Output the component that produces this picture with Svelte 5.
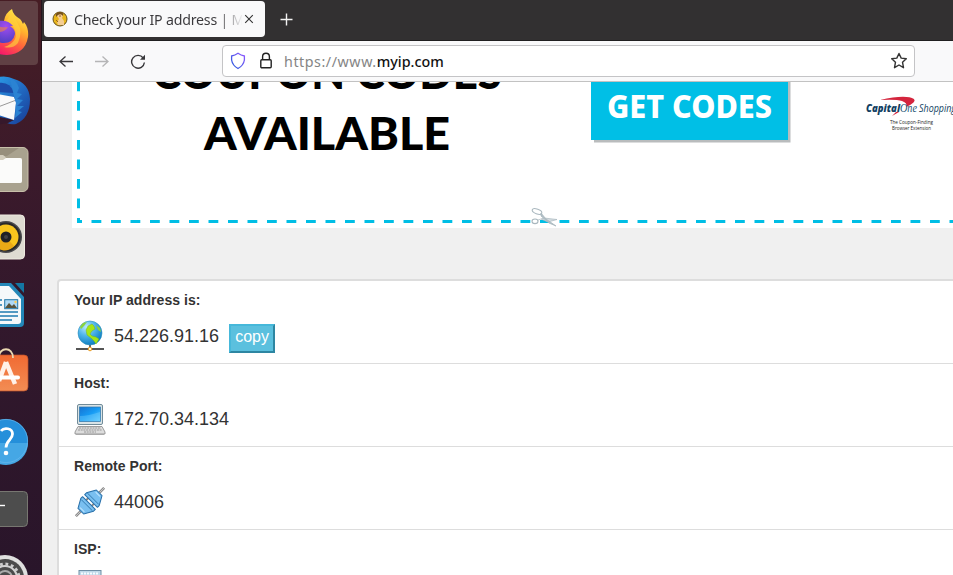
<script>
  const rows = [
    { label: 'Your IP address is:', value: '54.226.91.16', icon: 'globe', copy: true },
    { label: 'Host:', value: '172.70.34.134', icon: 'computer' },
    { label: 'Remote Port:', value: '44006', icon: 'plug' },
    { label: 'ISP:', value: '', icon: 'server' }
  ];
  const dock = ['firefox', 'mail', 'files', 'music', 'writer', 'store', 'help', 'terminal', 'settings'];
</script>

<div class="screen">
  <nav class="dock">
    {#each dock as app, i}
      <svg class="app" width="42" height="68" viewBox="0 {i * 68} 42 68">
        {#if app === 'firefox'}
          <defs>
            <linearGradient id="fx" x1=".8" y1="0" x2=".3" y2="1"><stop offset="0" stop-color="#fff44f" /><stop offset=".35" stop-color="#ffb52e" /><stop offset=".62" stop-color="#ff6a3a" /><stop offset="1" stop-color="#f5156c" /></linearGradient>
            <radialGradient id="fp" cx=".6" cy=".25" r=".8"><stop offset="0" stop-color="#a24cf0" /><stop offset="1" stop-color="#4b3fc0" /></radialGradient>
          </defs>
          <rect x="-6" y="1" width="44" height="64" rx="4" fill="#604044" />
          <path d="M-10 25L4 21Q5 13 12 9Q13 15 20 19Q22 21 23 24L24 22Q29 28 28 37Q25 54 7 55Q-5 55-10 48Z" fill="url(#fx)" />
          <path d="M5 22Q10 17 11 13Q16 18 18 24Q23 31 18 43Q13 49 4 47Q19 42 15 30Q13 24 5 22Z" fill="#ffd33c" opacity=".65" />
          <path d="M-6 22Q7 18 13 26L10 26Q15 29 15 34Q13 44 2 43Q-4 42-8 36Z" fill="url(#fp)" />
          <path d="M-3 26Q4 28 8 27Q5 32-1 32Z" fill="#ff8d2d" opacity=".55" />
        {:else if app === 'mail'}
          <defs><linearGradient id="tb" x1="0" y1="0" x2="1" y2="1"><stop stop-color="#2da8ee" /><stop offset=".5" stop-color="#226dc5" /><stop offset="1" stop-color="#173a94" /></linearGradient></defs>
          <path d="M-12 81Q3 73 14 79Q29 83 30 99Q30 118 16 124Q11 125 7 123L-10 115Z" fill="url(#tb)" />
          <path d="M-9 115L14 120L8 123L-10 126Z" fill="#36182b" />
          <path d="M-9 93L14 97L16 103L14 120L-8 113Z" fill="#fafafa" />
          <path d="M-2 107L15 100.5" stroke="#999" />
          <path d="M-2 83Q10 81 14 93L-3 92Z" fill="#1c4ba8" />
          <path d="M10 79Q16 79 19 88L17 93L22 94L17 99L23 100L17 106L24 106L18 111L22 112L15 118L16 102L14 96Z" fill="#2b83d3" />
        {:else if app === 'files'}
          <rect x="-16" y="147.5" width="44" height="44" rx="5" fill="#a9a28f" stroke="#c8c0aa" />
          <path d="M-4 148L19 148L7 156H-4Z" fill="#978f7c" />
          <path d="M-9 158V155H3Q5 156 6 158H20Q22 158 22 160V181Q22 183 20 183H-9Z" fill="#d3cdbd" />
          <path d="M-9 160H3L6 158H20Q22 158 22 160V181Q22 183 20 183H-9Z" fill="#fbfbfa" />
        {:else if app === 'music'}
          <rect x="-19" y="215" width="43.5" height="44" rx="4" fill="#dedbd1" stroke="#eeeae0" />
          <circle cx="6" cy="237" r="16" fill="#4a4a4d" />
          <circle cx="6" cy="237" r="14.5" fill="#292929" />
          <circle cx="6" cy="237" r="12.5" fill="#f8c51e" />
          <path d="M6 237L-6 244A12 12 0 0 0 14 246Z" fill="#e9a916" />
          <circle cx="6" cy="237" r="5.5" fill="#202125" />
          <circle cx="6" cy="237" r="2" fill="#404044" />
        {:else if app === 'writer'}
          <path d="M-15 283H11L24 297V323Q24 327 20 327H-15Z" fill="#2387b8" />
          <path d="M-15 286H9L21 299V321Q21 324 18 324H-15Z" fill="#f5f8fa" />
          <path d="M15 283H24V293Z" fill="#1476a2" />
          <path d="M0 300H2M0 305H2M0 312H18M0 316H18M0 320H12" stroke="#1e79b0" stroke-width="1.6" />
          <rect x="4.7" y="299.7" width="13" height="9" fill="#aed9f6" stroke="#2478a7" />
          <path d="M5 308L9 303L12 306L14 304L17 308Z" fill="#59543d" /><circle cx="15.5" cy="302" r="1.2" fill="#fc5" />
        {:else if app === 'store'}
          <defs><linearGradient id="shop" x2="0" y2="1"><stop stop-color="#f16a32" /><stop offset="1" stop-color="#f28d54" /></linearGradient></defs>
          <rect x="-16" y="355" width="44" height="36" rx="4" fill="url(#shop)" stroke="#bd522b" stroke-width=".7" />
          <path d="M-1 357C-1 347 13 346 13 358" fill="none" stroke="#ead8b1" stroke-width="1.8" />
          <path d="M6 362L-1 381M6 362L15 384" stroke="#fff1e8" stroke-width="4.5" />
          <path d="M-1 377.5H18" stroke="#fff" stroke-width="4" stroke-linecap="round" />
        {:else if app === 'help'}
          <circle cx="6" cy="441" r="22" fill="#258fda" />
          <path d="M-16 443H28A22 22 0 0 1-16 443Z" fill="#45a7e5" />
          <circle cx="6" cy="441" r="21.6" fill="none" stroke="#69b8ed" stroke-width=".7" />
          <path d="M1 431C4 427 12.5 428 12.5 434C12.5 440 6 440 6 447.5" stroke="white" stroke-width="2.8" fill="none" />
          <circle cx="6" cy="453" r="2.3" fill="white" />
        {:else if app === 'terminal'}
          <rect x="-16" y="491.5" width="43.5" height="35" rx="4" fill="#4d4d4d" stroke="#777771" />
          <path d="M0 505.5H5" stroke="white" stroke-width="1.4" />
        {:else}
          <circle cx="5" cy="578" r="23" fill="#e0e0df" />
          <circle cx="5" cy="578" r="19" fill="#4b4b4b" />
          <circle cx="5" cy="578" r="14" fill="none" stroke="#ccc" stroke-width="3" stroke-dasharray="2.8 2.7" />
          <circle cx="5" cy="578" r="12" fill="none" stroke="#d2d2d2" stroke-width="2" />
          <circle cx="5" cy="578" r="7" fill="none" stroke="#aaa" stroke-width="2" />
        {/if}
      </svg>
    {/each}
  </nav>

  <main class="browser">
    <header class="tabs">
      <div class="tab">
        <svg width="16" height="16" viewBox="0 0 16 16">
          <circle cx="8" cy="8" r="7" fill="#e8b51a" stroke="#65501d" />
          <path d="M5 5Q5 1 9 2Q12 4 10 7L12 10V14H6L5 11L7 8Z" fill="#f4cd93" />
          <path d="M4 6Q3 1 8 1Q12 1 11 5Q9 2 6 4Z" fill="#76501b" />
          <path d="M7 5H9M4 9L6 11" stroke="#9a6327" fill="none" />
        </svg>
        <span class="title">Check your IP address | M</span>
        <svg width="10" height="10" viewBox="0 0 10 10"><path d="M1.2 1.2L8.8 8.8M8.8 1.2L1.2 8.8" stroke="#333" stroke-width="1.1" /></svg>
      </div>
      <svg class="plus" width="13" height="13" viewBox="0 0 13 13"><path d="M6.5 .5V12.5M.5 6.5H12.5" stroke="#f2f2f2" stroke-width="1.4" /></svg>
    </header>

    <div class="toolbar">
      <svg width="16" height="16" viewBox="0 0 16 16"><path d="M15 8.5H2M7.5 3.5L2 8.5L7.5 13.5" fill="none" stroke="#38373a" stroke-width="1.3" /></svg>
      <svg width="16" height="16" viewBox="0 0 16 16"><path d="M1 8.5H14M8.5 3.5L14 8.5L8.5 13.5" fill="none" stroke="#b5b5b6" stroke-width="1.3" /></svg>
      <svg width="16" height="16" viewBox="0 0 16 16"><path d="M13.2 5A6.4 6.4 0 1 0 14.4 9.5" fill="none" stroke="#38373a" stroke-width="1.4" /><path d="M15 1.8V6.8H10Z" fill="#38373a" /></svg>
      <div class="address">
        <svg width="16" height="18" viewBox="0 0 16 18"><defs><linearGradient id="sh" x1="0" y1="1" x2="1" y2="0"><stop stop-color="#245bdb" /><stop offset="1" stop-color="#9057ff" /></linearGradient></defs><path d="M8 1.3Q11 3.5 14.4 4V8Q13.5 13.5 8 16.5Q2.5 13.5 1.6 8V4Q5 3.5 8 1.3Z" fill="none" stroke="url(#sh)" stroke-width="1.3" /></svg>
        <svg class="lock" width="12" height="17" viewBox="0 0 12 17"><rect x=".8" y="7.7" width="10.4" height="8" rx="1" fill="none" stroke="#222" stroke-width="1.4" /><path d="M2.6 7.5V4.7Q2.6 1.2 6 1.2T9.4 4.7V7.5" fill="none" stroke="#222" stroke-width="1.4" /></svg>
        <span class="url"><span class="protocol">https://www.</span><span class="domain">myip.com</span></span>
        <svg class="star" width="18" height="18" viewBox="0 0 18 18"><path d="M9 1.5L11.2 6.1L16.3 6.7L12.5 10.2L13.5 15.7L9 13L4.5 15.7L5.5 10.2L1.7 6.7L6.8 6.1Z" fill="none" stroke="#333" stroke-width="1.4" stroke-linejoin="round" /></svg>
      </div>
    </div>

    <section class="page">
      <svg class="ad" width="881" height="146" viewBox="72 82 881 146">
        <rect x="72" y="82" width="881" height="146" fill="white" />
        <path d="M78.5 81.5V223" stroke="#00bee5" stroke-width="3" stroke-dasharray="9.8 9.7" />
        <path d="M77 221.5H82M91.5 221.5H953" stroke="#00bee5" stroke-width="3" stroke-dasharray="9.8 9.7" />
        <g font-family="Lato, sans-serif" font-weight="900">
          <text x="152" y="89" font-size="45.8" textLength="350" lengthAdjust="spacingAndGlyphs">COUPON CODES</text>
          <text x="204" y="149.6" font-size="45.8" textLength="246" lengthAdjust="spacingAndGlyphs">AVAILABLE</text>
        </g>
        <path d="M594 82H790.5V142.5H594Z" fill="#b9bcbd" />
        <path d="M591 82H788V140H591Z" fill="#00bfe6" />
        <text x="607" y="118" font-family="Noto Sans, sans-serif" font-weight="800" font-size="31.4" textLength="165" lengthAdjust="spacingAndGlyphs" fill="white">GET CODES</text>
        <path d="M880 100Q906 94 914 99Q917 102 906 107Q908 103 902 101Q896 99 880 100Z" fill="#d4253d" />
        <path d="M899 112L892 116L896 112Z" fill="#d4253d" />
        <text x="866" y="112" font-family="Open Sans, sans-serif" font-weight="800" font-style="italic" font-size="11" textLength="34" lengthAdjust="spacingAndGlyphs" fill="#123f62">Capital</text>
        <text x="900" y="112" font-family="Liberation Serif, serif" font-style="italic" font-size="12" textLength="17" lengthAdjust="spacingAndGlyphs" fill="#235473">One</text>
        <text x="919" y="112" font-family="Open Sans, sans-serif" font-style="italic" font-size="10" textLength="37" lengthAdjust="spacingAndGlyphs" fill="#123f62">Shopping</text>
        <g font-family="Open Sans, sans-serif" font-size="5" fill="#222"><text x="890" y="123.7" textLength="43" lengthAdjust="spacingAndGlyphs">The Coupon-Finding</text><text x="892" y="129.5" textLength="39" lengthAdjust="spacingAndGlyphs">Browser Extension</text></g>
        <g fill="none" stroke="#a9b7be" stroke-width="1.1"><ellipse cx="537" cy="211.5" rx="5" ry="2.3" transform="rotate(20 537 211.5)" /><ellipse cx="535" cy="221.3" rx="3" ry="2.3" /><path d="M538 220L544 218L557 219.5L548 222L541 219" fill="#d5dde1" stroke-width=".7" /><path d="M541 213L546 219L556 226L549 223L541 216Z" fill="#b1c0c8" stroke-width=".8" /></g>
      </svg>

      <div class="card">
        {#each rows as row}
          <article>
            <h4>{row.label}</h4>
            <div class="value">
              <svg class="icon" width="32" height="32" viewBox="0 0 32 32">
                {#if row.icon === 'globe'}
                  <defs><radialGradient id="earth" cx=".35" cy=".25" r=".8"><stop stop-color="#bceaff" /><stop offset=".45" stop-color="#51b5eb" /><stop offset="1" stop-color="#087abf" /></radialGradient></defs>
                  <path d="M16 25V29M2 29H30" stroke="#555" stroke-width="1.8" />
                  <circle cx="16" cy="13" r="12" fill="url(#earth)" stroke="#2c8eba" stroke-width=".6" />
                  <path d="M14 6L18 4L20 6L21 9L18 11L16 14L18 16L22 17L25 19L22 24L20 21L17 18L13 15L12 10Z" fill="#a6e616" stroke="#69ab16" stroke-width=".4" />
                  <path d="M6 7L9 3L13 2L10 6L7 9ZM22 5L26 8L27 12L24 10Z" fill="#8bd33e" />
                  <circle cx="16" cy="29" r="1.8" fill="#fff9dc" stroke="#e99a22" />
                {:else if row.icon === 'computer'}
                  <defs><linearGradient id="lcd" x1="0" y1="0" x2="1" y2="1"><stop stop-color="#1773d2" /><stop offset=".5" stop-color="#169bf4" /><stop offset="1" stop-color="#65cfff" /></linearGradient></defs>
                  <rect x="3.5" y="1.5" width="25" height="20" rx="1.5" fill="#d9e3e6" stroke="#718b98" />
                  <rect x="5.5" y="4" width="21" height="14.5" fill="url(#lcd)" stroke="#3475a7" stroke-width=".7" />
                  <path d="M6 13Q14 13 26 9V18H6Z" fill="#83d7ff" opacity=".35" />
                  <path d="M4 23.5H28L31 29V31H1V29Z" fill="#ddd" stroke="#888" stroke-width=".8" />
                  <path d="M5 25H27M4 27H28M10 29H22" stroke="#999" stroke-width="1" stroke-dasharray="2 .7" /><path d="M2 31.5H30" stroke="#aaa" />
                {:else if row.icon === 'plug'}
                  <g transform="rotate(-45 16 16)">
                    <path d="M-4 16H3M29 16H36" stroke="#777" stroke-width="2.6" /><path d="M-4 16H3M29 16H36" stroke="#ccc" />
                    <path d="M14 12H18M14 20H18" stroke="#888" stroke-width="2" />
                    <path d="M14.5 7V25H12L3 20V12L12 7Z" fill="#79bff0" stroke="#286fa9" stroke-linejoin="round" />
                    <path d="M17.5 7V25H20L29 20V12L20 7Z" fill="#79bff0" stroke="#286fa9" stroke-linejoin="round" />
                    <path d="M11.5 8V24M20.5 8V24" stroke="#2f78ae" stroke-width=".9" /><path d="M5 13V19M27 13V19" stroke="#c1e6ff" />
                  </g>
                {:else}
                  <rect x="5" y="1.5" width="22" height="29" fill="#bfd9e9" stroke="#6f8fa5" /><path d="M7 4.5H25M7 7.5H25" stroke="#f4fbff" stroke-width="2" stroke-dasharray="2 1" />
                {/if}
              </svg>
              <span>{row.value}</span>
              {#if row.copy}<button>copy</button>{/if}
            </div>
          </article>
        {/each}
      </div>
    </section>
  </main>
</div>

<style>
  :global(body) { margin: 0; overflow: hidden; }
  * { box-sizing: border-box; }
  svg { display: block; flex: none; }
  .screen { width: 953px; height: 575px; display: flex; overflow: hidden; font-family: "Liberation Sans", Arial, sans-serif; }
  .dock { width: 42px; height: 575px; flex: none; overflow: hidden; background: linear-gradient(175deg, #471d24 0, #3b1a2b 30%, #32182c 55%, #29152a 100%); border-right: 1px solid #25151e; }
  .app { overflow: visible; }
  .browser { width: 911px; height: 575px; overflow: hidden; display: flex; flex-direction: column; background: #f0f0f0; }
  .tabs { height: 41px; flex: none; display: flex; background: #323031; border-bottom: 1px solid #201f20; }
  .tab { width: 221px; height: 36px; margin: 1px 0 0 2px; padding-left: 8px; border-radius: 4px; background: #f9f9fa; display: flex; align-items: center; }
  .title { width: 168px; margin: 0 2px 0 6px; padding-top: 2px; font: 14.2px/20px "Noto Sans", sans-serif; letter-spacing: -.22px; white-space: nowrap; overflow: hidden; color: transparent; background: linear-gradient(90deg, #39383b 85%, rgba(57,56,59,.05)); background-clip: text; }
  .plus { margin: 13px 0 0 15px; }
  .toolbar { height: 41px; flex: none; display: flex; align-items: center; padding-left: 16px; background: #f9f9fa; border-bottom: 1px solid #c2c2c2; }
  .toolbar > svg { margin-right: 20px; }
  .address { width: 693px; height: 32px; margin-left: 56px; padding: 0 7px; flex: none; display: flex; align-items: center; border: 1px solid #c4c4c6; border-radius: 4px; background: white; }
  .lock { margin-left: 14px; margin-bottom: 2px; }
  .url { display: flex; margin-left: 12px; padding-top: 2px; font: 14.3px/20px "Noto Sans", sans-serif; white-space: nowrap; }
  .protocol { color: #858585; letter-spacing: .54px; }
  .domain { color: #111; font-weight: 500; }
  .star { margin-left: auto; margin-right: -1px; }
  .page { height: 493px; overflow: hidden; }
  .ad { margin-left: 30px; }
  .card { width: 930px; margin: 51px 0 0 15px; border: 2px solid #ddd; border-radius: 4px; background: white; }
  article { height: 83px; padding: 9px 15px 0; border-bottom: 1px solid #ddd; color: #333; }
  h4 { height: 20px; margin: 0; font: bold 14px/20px "Liberation Sans", Arial, sans-serif; letter-spacing: .05px; }
  .icon { overflow: visible; }
  .value { display: flex; align-items: center; height: 32px; margin-top: 10px; font-size: 18px; }
  .value > span { margin-left: 8px; }
  button { display: flex; justify-content: center; width: 46px; height: 29px; margin: 5px 0 0 10px; padding: 0; border: 2px solid; border-color: #46b8da #2d86a2 #2d86a2 #46b8da; background: #5bc0de; color: white; font: 16px/21px "Liberation Sans", Arial, sans-serif; align-items: flex-start; }
</style>
